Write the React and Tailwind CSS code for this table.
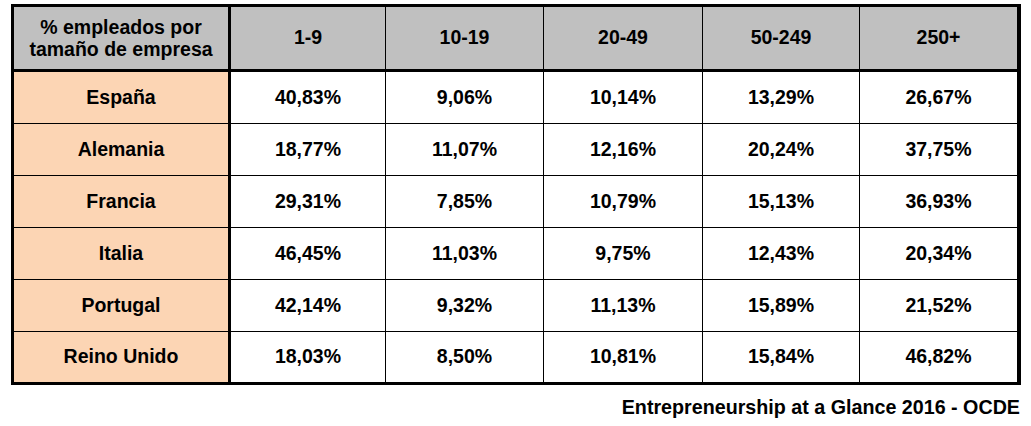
const cols = ["1-9", "10-19", "20-49", "50-249", "250+"];
const widths = ["w-[155px]", "w-[158px]", "w-[159px]", "w-[157px]", "w-[157px]"];

const rows = [
  ["España", "40,83%", "9,06%", "10,14%", "13,29%", "26,67%"],
  ["Alemania", "18,77%", "11,07%", "12,16%", "20,24%", "37,75%"],
  ["Francia", "29,31%", "7,85%", "10,79%", "15,13%", "36,93%"],
  ["Italia", "46,45%", "11,03%", "9,75%", "12,43%", "20,34%"],
  ["Portugal", "42,14%", "9,32%", "11,13%", "15,89%", "21,52%"],
  ["Reino Unido", "18,03%", "8,50%", "10,81%", "15,84%", "46,82%"],
];

export default function App() {
  return (
    <div
      className="min-h-[426px] w-[1031px] bg-white pl-[11px] pt-[4px] text-black"
      style={{ fontFamily: '"Liberation Sans", Arial, sans-serif' }}
    >
      <div className="w-fit border-[3px] border-r-4 border-black text-[19.5px] font-bold">
        {/* header */}
        <div className="flex h-[65px] border-b-[3px] border-black bg-[#c0c0c0]">
          <div className="flex w-[217px] items-center justify-center border-r-[3px] border-black text-center leading-[22px]">
            % empleados por
            <br />
            tamaño de empresa
          </div>
          {cols.map((c, i) => (
            <div
              key={c}
              className={`flex items-center justify-center ${widths[i]} ${i < 4 ? "border-r border-black" : ""}`}
            >
              {c}
            </div>
          ))}
        </div>

        {rows.map((r, ri) => (
          <div
            key={r[0]}
            className={`flex ${ri < rows.length - 1 ? "h-[52px] border-b border-black" : "h-[50px]"}`}
          >
            <div className="flex w-[217px] items-center justify-center border-r-[3px] border-black bg-[#fcd5b4]">
              {r[0]}
            </div>
            {r.slice(1).map((v, i) => (
              <div
                key={i}
                className={`flex items-center justify-center ${widths[i]} ${i < 4 ? "border-r border-black" : ""}`}
              >
                {v}
              </div>
            ))}
          </div>
        ))}
      </div>

      <div className="mt-[12px] w-[1009px] text-right text-[19.7px] font-bold leading-[20px]">
        Entrepreneurship at a Glance 2016 - OCDE
      </div>
    </div>
  );
}
